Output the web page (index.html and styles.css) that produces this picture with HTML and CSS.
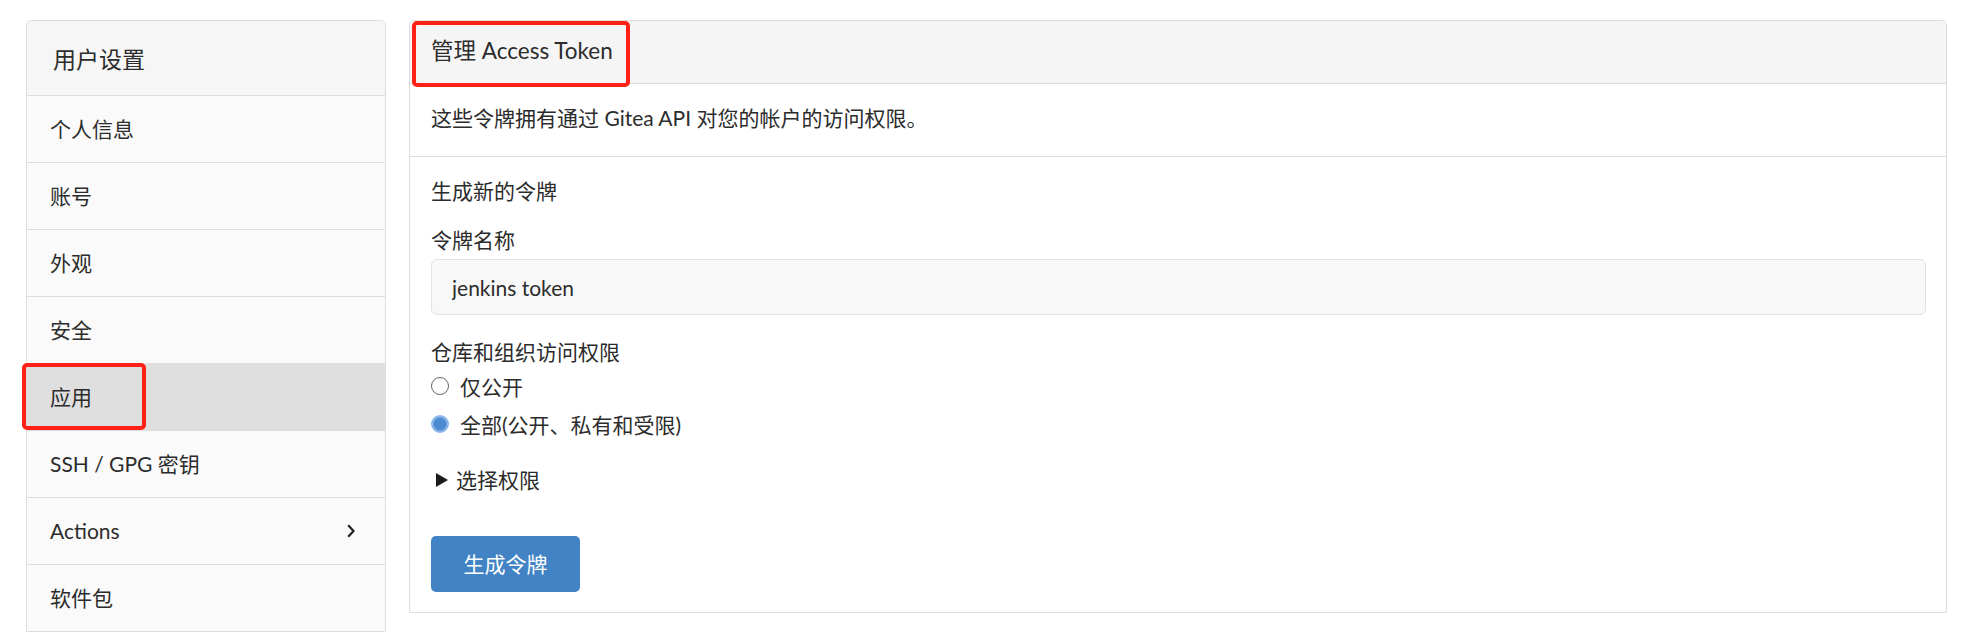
FILE: index.html
```html
<!DOCTYPE html>
<html lang="zh-CN">
<head>
<meta charset="utf-8">
<title>应用 - 用户设置</title>
<link rel="stylesheet" href="styles.css">
</head>
<body>
<div class="page">
  <aside class="side">
    <div class="side-head">用户设置</div>
    <a class="side-item">个人信息</a>
    <a class="side-item">账号</a>
    <a class="side-item">外观</a>
    <a class="side-item">安全</a>
    <a class="side-item active">应用</a>
    <a class="side-item">SSH / GPG 密钥</a>
    <a class="side-item has-sub">Actions
      <svg class="chev" width="8" height="14" viewBox="0 0 8 14"><polyline points="1.2,1.2 6.5,7 1.2,12.8" fill="none" stroke="#222" stroke-width="2.2"/></svg>
    </a>
    <a class="side-item">软件包</a>
  </aside>

  <main class="panel">
    <h4 class="panel-head">管理 Access Token</h4>
    <div class="panel-desc">这些令牌拥有通过 Gitea API 对您的帐户的访问权限。</div>
    <form class="panel-form">
      <div class="form-title">生成新的令牌</div>
      <label class="field-label">令牌名称</label>
      <input class="text-input" type="text" value="jenkins token">
      <div class="field-label perm-label">仓库和组织访问权限</div>
      <label class="radio first"><span class="radio-dot"></span>仅公开</label>
      <label class="radio"><span class="radio-dot checked"></span>全部(公开、私有和受限)</label>
      <div class="disclosure"><span class="tri"></span>选择权限</div>
      <button class="btn-primary" type="button">生成令牌</button>
    </form>
  </main>

  <div class="mark mark-head"></div>
  <div class="mark mark-side"></div>
</div>
</body>
</html>
```

FILE: styles.css
```css
* { box-sizing: border-box; }

html, body {
  margin: 0;
  padding: 0;
  background: #fff;
}

body {
  font-family: Lato, "Noto Sans CJK SC", sans-serif;
  font-size: 21px;
  line-height: 30px;
  color: #2c2c2c;
}

.page {
  position: relative;
  display: flex;
  align-items: flex-start;
  gap: 23px;
  padding: 20px 30px 0 26px;
}

/* ---------- sidebar ---------- */
.side {
  flex: none;
  width: 360px;
  display: flex;
  flex-direction: column;
  border: 1px solid #dedede;
  border-radius: 5px 5px 0 0;
  overflow: hidden;
  background: #fafafa;
}

.side-head {
  background: #f6f6f6;
  font-size: 23px;
  line-height: 32px;
  padding: 22px 26px 20px;
  border-bottom: 1px solid #dedede;
}

.side-item {
  display: flex;
  align-items: center;
  justify-content: space-between;
  padding: 18px 23px;
  height: 67px;
  border-top: 1px solid #dedede;
  color: #2c2c2c;
  text-decoration: none;
}

.side-head + .side-item { border-top: none; height: 66px; }

.side-item.active {
  background: #dfdfdf;
}

.chev {
  margin-right: 7px;
}

/* ---------- main panel ---------- */
.panel {
  flex: 1;
  min-width: 0;
  border: 1px solid #dedede;
  border-radius: 5px 5px 0 0;
  background: #fff;
}

.panel-head {
  margin: 0;
  background: #f5f5f5;
  font-size: 22.5px;
  font-weight: normal;
  line-height: 32px;
  padding: 14px 21px 16px;
  border-bottom: 1px solid #dedede;
  border-radius: 5px 5px 0 0;
}

.panel-desc {
  padding: 19px 21px 23px;
  border-bottom: 1px solid #dedede;
}

.panel-form {
  display: flex;
  flex-direction: column;
  align-items: flex-start;
  padding: 19px 20px 20px 21px;
}

.form-title {
  line-height: 30px;
}

.field-label {
  display: block;
  margin-top: 19px;
}

.text-input {
  display: block;
  width: 100%;
  height: 56px;
  margin-top: 4px;
  padding: 0 20px;
  font: inherit;
  color: #2c2c2c;
  background: #f8f8f8;
  border: 1px solid #e2e2e2;
  border-radius: 6px;
  outline: none;
}

.perm-label {
  margin-top: 22px;
}

.radio {
  display: flex;
  align-items: center;
  gap: 11px;
  margin-top: 8px;
}

.radio.first { margin-top: 5px; }

.radio-dot {
  width: 18px;
  height: 18px;
  border-radius: 50%;
  border: 1.5px solid #666;
  background: #fff;
  margin-top: -3px;
}

.radio-dot.checked {
  border: 2px solid #8cb6e6;
  background: #4a8ad3;
  box-shadow: inset 0 0 0 1px #6fa3df;
}

.disclosure {
  display: flex;
  align-items: center;
  gap: 8px;
  margin-top: 25px;
  padding-left: 5px;
}

.tri {
  width: 0;
  height: 0;
  border-top: 7px solid transparent;
  border-bottom: 7px solid transparent;
  border-left: 12px solid #1a1a1a;
}

.btn-primary {
  margin-top: 41px;
  width: 149px;
  height: 56px;
  border: none;
  border-radius: 5px;
  background: #4183c4;
  color: #fff;
  font: inherit;
  font-size: 21px;
  cursor: pointer;
}

/* ---------- annotation boxes ---------- */
.mark {
  position: absolute;
  border: 4px solid #ff2116;
  border-radius: 5px;
  pointer-events: none;
}

.mark-head {
  left: 412px;
  top: 21px;
  width: 218px;
  height: 66px;
}

.mark-side {
  left: 22px;
  top: 363px;
  width: 124px;
  height: 67px;
}
```
